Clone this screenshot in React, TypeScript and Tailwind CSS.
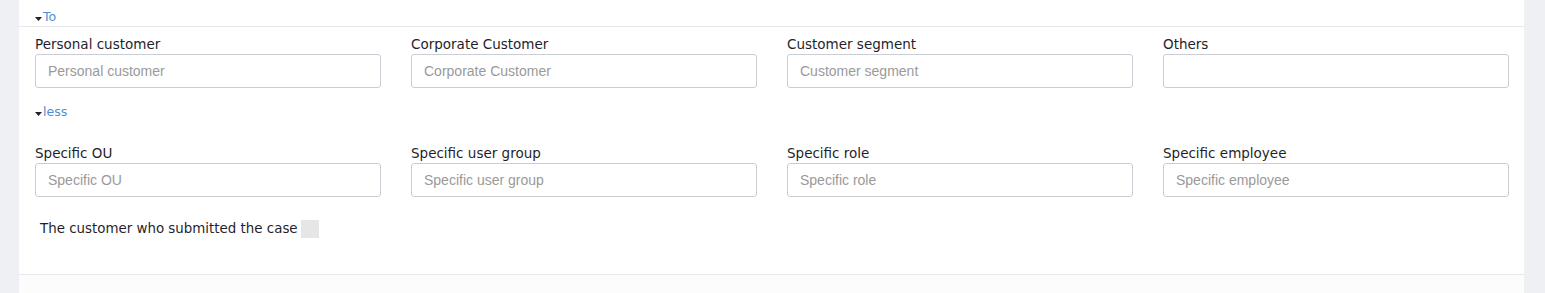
type Field = { label: string; placeholder: string };

const rowOne: Field[] = [
  { label: "Personal customer", placeholder: "Personal customer" },
  { label: "Corporate Customer", placeholder: "Corporate Customer" },
  { label: "Customer segment", placeholder: "Customer segment" },
  { label: "Others", placeholder: "" },
];

const rowTwo: Field[] = [
  { label: "Specific OU", placeholder: "Specific OU" },
  { label: "Specific user group", placeholder: "Specific user group" },
  { label: "Specific role", placeholder: "Specific role" },
  { label: "Specific employee", placeholder: "Specific employee" },
];

function Caret() {
  return (
    <svg width="7" height="4" viewBox="0 0 7 4" className="mr-[1px] mt-[4px]">
      <path d="M0 0h7L3.5 4z" fill="#222" />
    </svg>
  );
}

function Toggle({ text }: { text: string }) {
  return (
    <div className="flex items-center font-['DejaVu_Sans',sans-serif] text-[12.5px] leading-[16px] text-[#4a8fd8]">
      <Caret />
      <span>{text}</span>
    </div>
  );
}

function FieldRow({ fields }: { fields: Field[] }) {
  return (
    <div className="grid grid-cols-[repeat(4,346px)] gap-[30px]">
      {fields.map((f) => (
        <label key={f.label} className="flex flex-col">
          <span className="font-['DejaVu_Sans',sans-serif] text-[13.5px] leading-[19px] text-[#1f1f2b]">
            {f.label}
          </span>
          <input
            placeholder={f.placeholder}
            className="h-[34px] w-full rounded-[3px] border border-[#c9cdd4] bg-white px-[12px] font-['Liberation_Sans',Arial,sans-serif] text-[14px] text-[#333] outline-none placeholder:text-[#9a9a9a]"
          />
        </label>
      ))}
    </div>
  );
}

export default function App() {
  return (
    <div className="flex h-[293px] w-full bg-[#eef0f4] pl-[19px]">
      <div className="flex w-[1505px] flex-col bg-[#fcfcfd]">
        <div className="bg-white">
          <div className="flex h-[27px] items-end border-b border-[#e6e8eb] px-[16px] pb-[1px]">
            <Toggle text="To" />
          </div>
          <div className="pl-[16px] pr-[15px] pt-[8px] pb-[36px]">
            <FieldRow fields={rowOne} />
            <div className="mt-[16px]">
              <Toggle text="less" />
            </div>
            <div className="mt-[24px]">
              <FieldRow fields={rowTwo} />
            </div>
            <div className="mt-[23px] flex h-[18px] items-center pl-[5px]">
              <span className="font-['DejaVu_Sans',sans-serif] text-[13.4px] leading-[18px] text-[#1f1f2b]">
                The customer who submitted the case
              </span>
              <span className="ml-[3px] h-[18px] w-[18px] bg-[#e6e6e6]" />
            </div>
          </div>
        </div>
        <div className="border-t border-[#e6e8eb]" />
      </div>
    </div>
  );
}
